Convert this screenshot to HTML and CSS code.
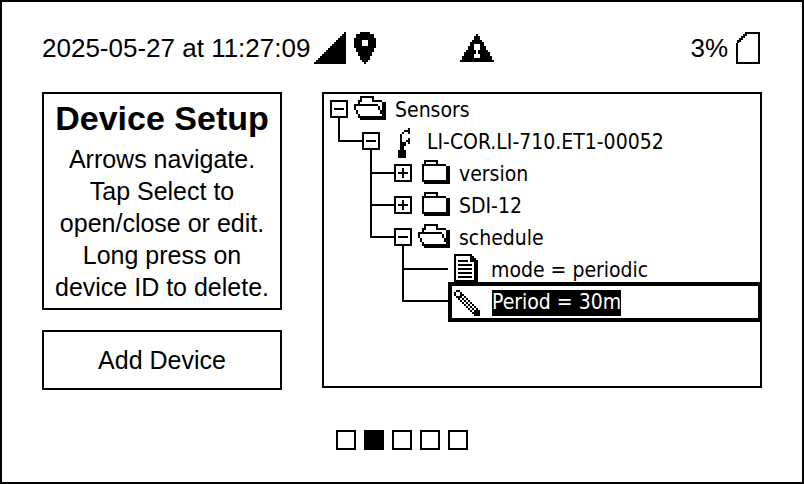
FILE: index.html
```html
<!DOCTYPE html>
<html lang="en">
<head>
    <meta charset="UTF-8">
    <meta name="viewport" content="width=device-width, initial-scale=1.0">
    <title>Device Setup</title>
    <link rel="stylesheet" href="styles.css">
</head>
<body>
    <div class="screen">
        <header class="status">
            <time datetime="2025-05-27T11:27:09">2025-05-27 at 11:27:09</time>
            <svg class="signal" width="32" height="32" viewBox="0 0 16 16" role="img" aria-label="Signal">
                <path d="M15 0h1v16H0v-1h1v-1h1v-1h1v-1h1v-1h1v-1h1V9h1V8h1V7h1V6h1V5h1V4h1V3h1V2h1V1h1z"/>
            </svg>
            <svg class="pin" width="22" height="32" viewBox="0 0 11 16" role="img" aria-label="Location">
                <path fill-rule="evenodd" d="M3 0h5v1h2v2h1v5h-1v2H9v2H8v2H7v1H6v1H5v-1H4v-1H3v-2H2v-2H1V8H0V3h1V1h2zM4 4v3h3V4z"/>
            </svg>
            <svg class="warning" width="34" height="28" viewBox="0 0 17 14" role="img" aria-label="Warning">
                <path fill-rule="evenodd" d="M8 0h1v1h1v2h1v1h1v2h1v2h1v1h1v2h1v2h1v1H0v-1h1v-2h1V9h1V8h1V6h1V4h1V3h1V1h1zM7 5v3h1v2H7v2h3v-2H9V8h1V5z"/>
            </svg>
            <span class="battery-level">3%</span>
            <svg class="battery" width="24" height="32" viewBox="0 0 24 32" role="img" aria-label="Battery">
                <path fill="none" stroke="#000" stroke-width="2" d="M1 11v20h22V1H10v2H8v2H6v2H4v2H2v2"/>
            </svg>
        </header>

        <main class="content">
            <div class="side">
                <section class="help">
                    <h1>Device Setup</h1>
                    <p>Arrows navigate.<br>Tap Select to<br>open/close or edit.<br>Long press on<br>device ID to delete.</p>
                </section>
                <button type="button" class="add">Add Device</button>
            </div>

            <div class="tree">
                <div class="row">
                    <div class="knot open"><button type="button" class="toggle" aria-label="Collapse Sensors"></button></div>
                    <svg class="icon" width="32" height="24"><use href="#folder-open"/></svg>
                    <span class="label">Sensors</span>
                </div>
                <div class="row">
                    <div class="branch last"></div>
                    <div class="knot open"><button type="button" class="toggle" aria-label="Collapse LI-COR.LI-710.ET1-00052"></button></div>
                    <svg class="icon" width="32" height="30"><use href="#sensor"/></svg>
                    <span class="label">LI-COR.LI-710.ET1-00052</span>
                </div>
                <div class="row level-2">
                    <div class="branch"></div>
                    <div class="knot"><button type="button" class="toggle" aria-label="Expand version"></button></div>
                    <svg class="icon" width="32" height="24"><use href="#folder"/></svg>
                    <span class="label">version</span>
                </div>
                <div class="row level-2">
                    <div class="branch"></div>
                    <div class="knot"><button type="button" class="toggle" aria-label="Expand SDI-12"></button></div>
                    <svg class="icon" width="32" height="24"><use href="#folder"/></svg>
                    <span class="label">SDI-12</span>
                </div>
                <div class="row level-2">
                    <div class="branch last"></div>
                    <div class="knot open"><button type="button" class="toggle" aria-label="Collapse schedule"></button></div>
                    <svg class="icon" width="32" height="24"><use href="#folder-open"/></svg>
                    <span class="label">schedule</span>
                </div>
                <div class="row level-3">
                    <div class="branch leaf"></div>
                    <div class="item">
                        <svg class="file" width="24" height="28"><use href="#file"/></svg>
                        <span class="label">mode = periodic</span>
                    </div>
                </div>
                <div class="row level-3">
                    <div class="branch leaf last"></div>
                    <div class="item selected">
                        <svg class="pencil" width="26" height="26"><use href="#pencil"/></svg>
                        <span class="value">Period = 30m</span>
                    </div>
                </div>
            </div>
        </main>

        <nav class="pages">
            <a href="#page1" aria-label="Page 1"></a>
            <a href="#page2" aria-label="Page 2" class="current"></a>
            <a href="#page3" aria-label="Page 3"></a>
            <a href="#page4" aria-label="Page 4"></a>
            <a href="#page5" aria-label="Page 5"></a>
        </nav>
    </div>

    <!-- icon shapes, one unit = 2px -->
    <svg class="defs" width="0" height="0">
        <symbol id="folder" viewBox="0 0 16 12">
            <path fill-rule="evenodd" d="M3 0h7v2h4v1h2v9H3v-1H2V2h1zM4 1v1h5V1zM3 3v7h11V3z"/>
        </symbol>
        <symbol id="folder-open" viewBox="0 0 16 12">
            <path fill-rule="evenodd" d="M4 0h6v2h4v1h2v9H3v-1H2V9H1V7H0V4h2V2h1V0zM4 1v2H3v1h9v1h1v2h1V3H9V1zM1 5v2h1v2h1v1h11V9h-1V7h-1V5z"/>
        </symbol>
        <symbol id="sensor" viewBox="-6 0 16 15">
            <path d="M5 0h1v3H5V2H4V1h1zM3 1h1v1H3zM2 2h1v1H2zM1 3h1v4h1v1h1v1H3v2h1v4H0v-4h1zM5 5h1v3H5V7H4V6h1zM3 7h1v1H3z"/>
        </symbol>
        <symbol id="file" viewBox="0 0 12 14">
            <path fill-rule="evenodd" d="M0 0h9v1h1v1h1v1h1v11H0zM1 1v12h9V4H8V1zM2 3h5v1H2zM2 5h7v1H2zM2 7h7v1H2zM2 9h7v1H2zM2 11h7v1H2z"/>
        </symbol>
        <symbol id="pencil" viewBox="0 0 13 13">
            <path d="M1 0h2v1H1zM0 1h1v2H0zM3 1h1v2H3zM1 3h2v1H1z"/>
            <path d="M4 2h1v1H4zM5 3h1v1H5zM6 4h1v1H6zM7 5h1v1H7zM8 6h1v1H8zM9 7h1v1H9zM10 8h1v1h-1z"/>
            <path d="M3 3h1v1H3zM4 4h1v1H4zM5 5h1v1H5zM6 6h1v1H6zM7 7h1v1H7zM8 8h1v1H8zM9 9h1v1H9z"/>
            <path d="M2 4h1v1H2zM3 5h1v1H3zM4 6h1v1H4zM5 7h1v1H5zM6 8h1v1H6zM7 9h1v1H7zM8 10h1v1H8z"/>
            <path d="M11 9h1v1h1v3h-3v-1H9v-1h1v-1h1z"/>
        </symbol>
    </svg>
</body>
</html>
```
FILE: styles.css
```css
*,
*::before,
*::after {
    box-sizing: border-box;
}
body {
    margin: 0;
    background: #fff;
    color: #000;
    font-family: "Liberation Sans", Arial, sans-serif;
    font-size: 25px;
}
svg {
    display: block;
    flex: none;
    shape-rendering: crispEdges;
}
.screen {
    min-height: 100vh;
    padding: 30px 40px;
    border: 2px solid #000;
}
.status {
    display: flex;
    align-items: center;
    height: 32px;
    font-size: 26px;
    white-space: nowrap;
}
.signal {
    margin-left: 4px;
}
.pin {
    margin-left: 8px;
}
.warning {
    margin-left: 84px;
}
.battery-level {
    margin-left: auto;
    margin-right: 8px;
}
.battery {
    margin-right: 2px;
}
.content {
    display: grid;
    grid-template-columns: 240px 1fr;
    align-items: start;
    gap: 40px;
    margin-top: 28px;
}
.side {
    display: flex;
    flex-direction: column;
    gap: 20px;
}
.help {
    padding: 3px 0 5px;
    border: 2px solid #000;
    text-align: center;
    white-space: nowrap;
}
.help h1 {
    margin: 0 0 4px;
    font-size: 34px;
    line-height: 42px;
}
.help p {
    margin: 0;
    line-height: 32px;
}
.add {
    height: 60px;
    padding: 0;
    border: 2px solid #000;
    background: #fff;
    color: #000;
    font: inherit;
}
.tree {
    min-height: 296px;
    padding-left: 6px;
    border: 2px solid #000;
    font-family: "DejaVu Sans Condensed", "Noto Sans", sans-serif;
    font-size: 21px;
}
.row {
    display: flex;
    height: 32px;
    white-space: nowrap;
}
.level-2 {
    padding-left: 32px;
}
.level-3 {
    padding-left: 64px;
}

/* connector lines */
.branch {
    width: 24px;
    margin-left: 8px;
}
.branch::before,
.branch::after {
    content: "";
    display: block;
    height: 16px;
    border-left: 2px solid #000;
}
.branch::before {
    border-bottom: 2px solid #000;
}
.branch.last::after {
    border: 0;
}
.branch.leaf {
    width: 46px;
}

.knot {
    width: 18px;
    padding-top: 6px;
}
.knot.open::after {
    content: "";
    display: block;
    width: 2px;
    height: 8px;
    margin-left: 8px;
    background: #000;
}
.toggle {
    display: block;
    width: 18px;
    height: 18px;
    padding: 0;
    border: 2px solid #000;
    background:
        linear-gradient(#000, #000) center / 10px 2px no-repeat,
        linear-gradient(#000, #000) center / 2px 10px no-repeat,
        #fff;
}
.open .toggle {
    background: linear-gradient(#000, #000) center / 10px 2px no-repeat #fff;
}
.icon {
    margin: 2px 9px 0 6px;
}
.label {
    line-height: 32px;
}
.item {
    display: flex;
    flex: 1;
    padding-left: 6px;
}
.file {
    margin-right: 13px;
}
.selected {
    height: 40px;
    margin: -4px -2px 0 0;
    padding: 4px 0 0 2px;
    border: 4px solid #000;
}
.pencil {
    margin-right: 12px;
}
.value {
    height: 26px;
    background: #000;
    color: #fff;
    line-height: 24px;
}
.pages {
    display: flex;
    justify-content: center;
    gap: 8px;
    margin-top: 40px;
}
.pages a {
    width: 20px;
    height: 20px;
    border: 2px solid #000;
}
.pages .current {
    background: #000;
}
.defs {
    display: none;
}
```
